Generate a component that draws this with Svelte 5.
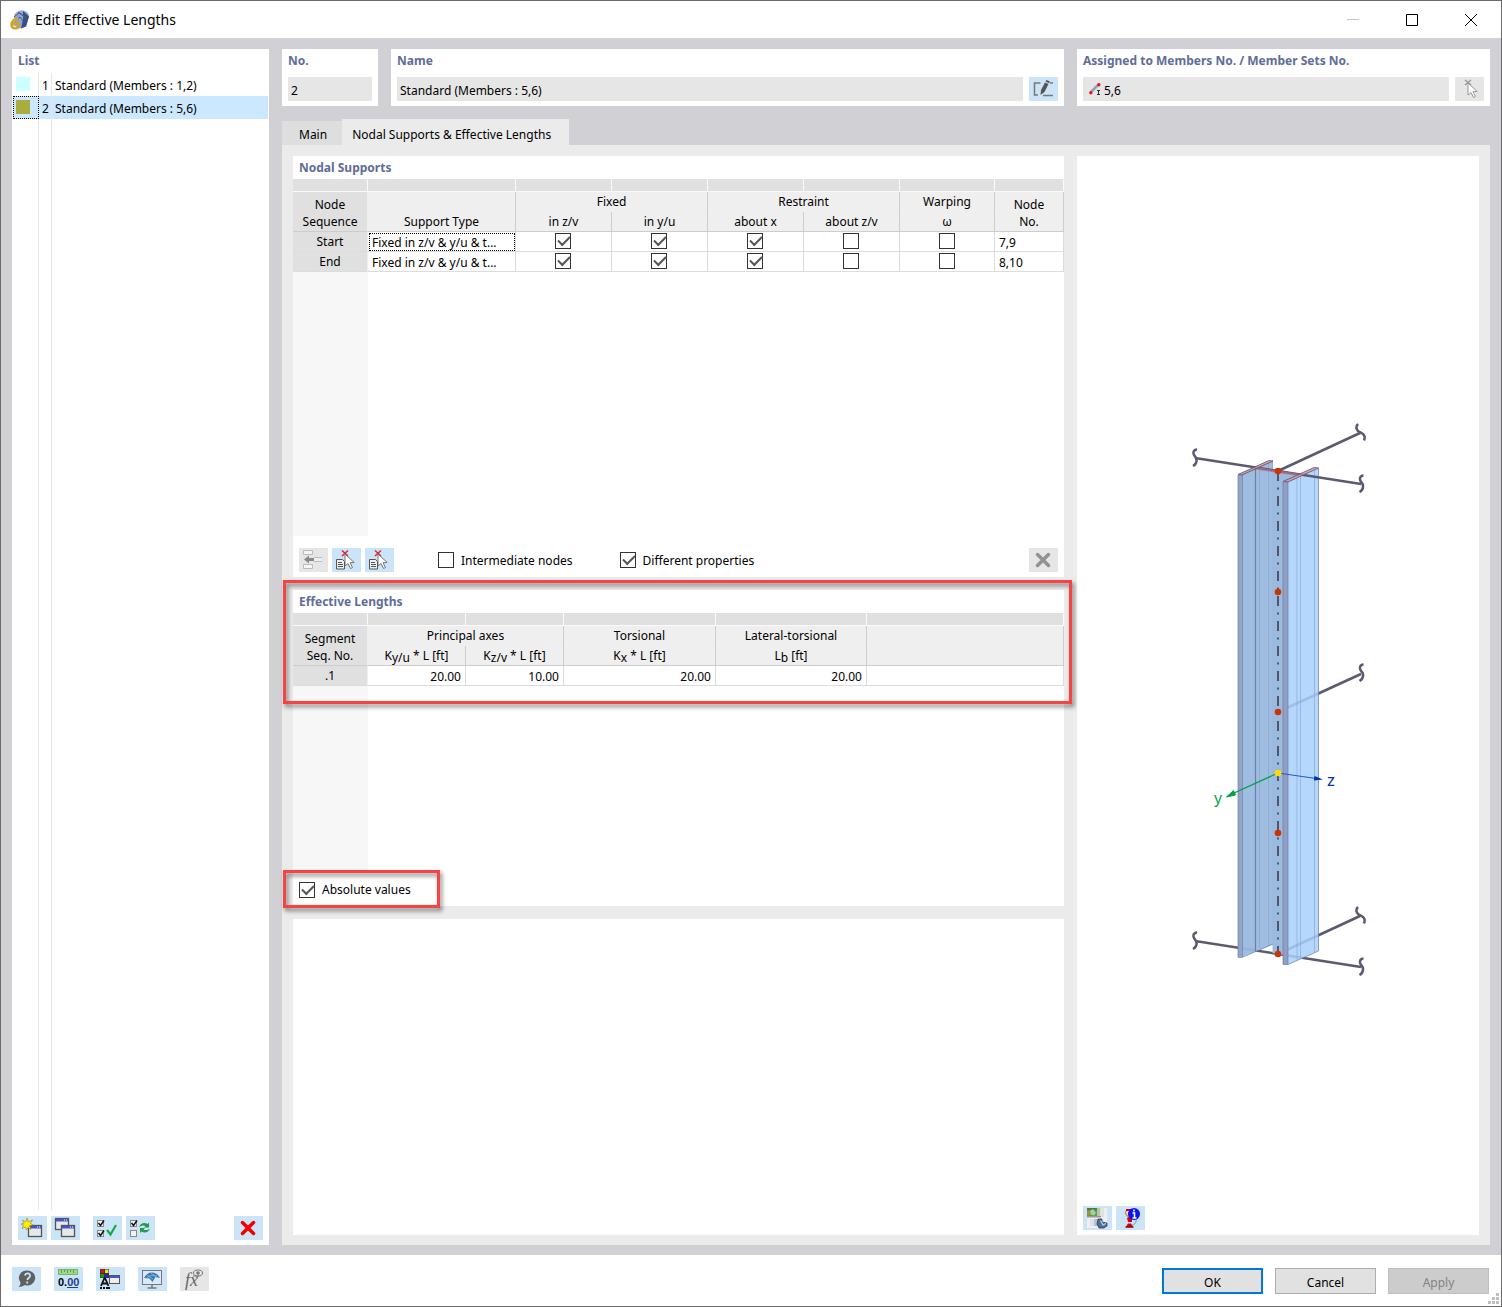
<script lang="ts">
    const members = [
        { no: 1, name: "Standard (Members : 1,2)", color: "#ccffff" },
        { no: 2, name: "Standard (Members : 5,6)", color: "#a9ad40" },
    ];
    let selected: number = 2;
    let name: string = "Standard (Members : 5,6)";
    let assigned: string = "5,6";
    let intermediateNodes: boolean = false;
    let differentProperties: boolean = true;
    let absoluteValues: boolean = true;

    const checkColumns: string[] = [
        "Fixed in z/v",
        "Fixed in y/u",
        "Restraint about x",
        "Restraint about z/v",
        "Warping ω",
    ];
    let supports = [
        { seq: "Start", type: "Fixed in z/v & y/u & t...", checks: [true, true, true, false, false], nodes: "7,9" },
        { seq: "End", type: "Fixed in z/v & y/u & t...", checks: [true, true, true, false, false], nodes: "8,10" },
    ];
    const segments = [{ seq: ".1", values: ["20.00", "10.00", "20.00", "20.00"] }];

    const footerTools = [
        { icon: "help", label: "Help" },
        { icon: "units", label: "Units and decimal places" },
        { icon: "display", label: "Display settings" },
        { icon: "view", label: "View" },
        { icon: "formula", label: "Formula", disabled: true },
    ];

    const sCurve: string = "c-4 0-4.5 4.500-2 7s2 7.500-2 9.500";
    const zCurve: string = "c-3 3-1.500 7 2.500 8.500s5 4.500 3.500 8";
    const axisNodes: number[] = [61, 182, 302, 423, 544];
</script>

{#snippet miniWindow(x, y)}
    <rect x={x + 0.5} y={y + 0.5} width="13" height="11" fill="#e8e8e8" stroke="#555" stroke-width="1.3" />
    <rect x={x + 1} y={y + 1} width="12" height="2.5" fill="#4656c8" />
    <path d="M{x + 9} {y + 2}h1m1 0h1" stroke="#fff" />
{/snippet}

{#snippet tick(x, y, on)}
    <rect x={x + 0.5} y={y + 0.5} width="6" height="6" fill="#f2f2f2" stroke="#888" />
    {#if on}
        <path d="M{x + 1.5} {y + 3}l2 2.500 3.500-5" fill="none" stroke="#111" stroke-width="1.5" />
    {/if}
{/snippet}

{#snippet icon(kind)}
    <svg viewBox="0 0 29 24" width="29" height="24" aria-hidden="true">
        {#if kind === "new"}
            {@render miniWindow(10, 9)}
            <path d="M9 2l1.200 3.800L14.500 4l-2 3.500 2.500 1.500-3.500.8 1.500 3.700-3-2L8.500 14l-1-3-3.500 1.500 1.500-3.500-2.500-1 3-.8L4.500 4l3.300 1.800z" fill="#ffee00" stroke="#8a8436" stroke-width=".6" />
        {:else if kind === "copy"}
            {@render miniWindow(4, 2)}
            {@render miniWindow(10, 9)}
        {:else if kind === "checkAll"}
            {@render tick(4, 4, true)}
            {@render tick(4, 14, true)}
            <path d="M14 14l3.500 4.500L23 9" fill="none" stroke="#18a848" stroke-width="2.200" />
        {:else if kind === "checkSwap"}
            {@render tick(4, 4, true)}
            {@render tick(4, 14, false)}
            <path d="M13 11c1.500-4 5.500-5 8.500-3l1.500-1.500v5h-5l1.500-1.500c-2-1.200-4.500-.5-6.500 1zM24 12.500c-1.500 4-5.500 5-8.500 3L14 17v-5h5l-1.500 1.500c2 1.200 4.500.5 6.500-1z" fill="#249a4c" />
        {:else if kind === "delete"}
            <path d="M8.500 6.500L19.500 17.500M19.500 6.500L8.500 17.500" stroke="#f40000" stroke-width="3.500" stroke-linecap="round" />
        {:else if kind === "edit"}
            <path d="M11.500 6H5.500v12h3.500M21 6h3M14 18.500h10" fill="none" stroke="#777" stroke-width="1.500" />
            <path d="M12 13l4-7.500 3.500 1.500-4 8-4 3zM16.500 4.500L17.500 3l3.500 1.500-1 1.700z" fill="#555" />
        {:else if kind === "pickGray" || kind === "pick"}
            {@const gray = kind === "pickGray"}
            <path d={gray ? "M10 3l6 5M16 3l-6 5" : "M10 2.500l6 5.500M16 2.500l-6 5.500"} stroke={gray ? "#999" : "#e3262c"} stroke-width="1.500" />
            <path d="M13 6v12l3-2.500 2.500 5 2-1-2.500-4.800 4.200-.2z" fill="#fff" stroke={gray ? "#999" : "#777"} />
            {#if !gray}
                <path d="M4.500 11.500h6l2 2v7.500h-8z" fill="#eee" stroke="#555" />
                <path d="M6 14.500h4M6 16.500h5M6 18.500h5" stroke="#555" />
            {/if}
        {:else if kind === "insert"}
            <path d="M4.500 2.500h9v4h-9zM4.500 16.500h9v4h-9z" fill="#f5f5f5" stroke="#bbb" />
            <path d="M14.500 9.500h8v4h-8z" fill="#f0f0f0" />
            <path d="M15 9.500h8M15 13.500h8" stroke="#bbb" />
            <path d="M5 11.500l5-4v2.500h5v3h-5v2.500z" fill="#888" />
        {:else if kind === "clear"}
            <path d="M8.500 6.500L19.500 17.500M19.500 6.500L8.500 17.500" stroke="#929292" stroke-width="3.500" stroke-linecap="round" />
        {:else if kind === "render"}
            <rect x="4" y="2" width="20" height="20" fill="#eef0ef" />
            <rect x="4" y="2" width="10" height="9" fill="#7b9046" />
            <path d="M4 2h10v2H4z" fill="#5d7445" />
            <path d="M4 5h4v4H4z" fill="#b08a3a" />
            <path d="M7 5l3-2 3 4-2 2.500-3-1z" fill="#7fe3a4" />
            <path d="M14 2h3v9h-3z" fill="#b4c6a5" />
            <path d="M17 2h4v9h-4z" fill="#dde5d8" />
            <path d="M4 10h14v1.500H4z" fill="#999" />
            <path d="M7 13h4v7H7z" fill="#dde2ea" />
            <path d="M11 13h4v7h-4z" fill="#b5c1d6" />
            <path d="M15 13h4v3l5 1v3l-3 2h-5l-2-4z" fill="#526c95" stroke="#2e4260" stroke-width=".8" />
            <path d="M17.500 14.500l2.500 4.500 3-1.500" fill="none" stroke="#b8d0f0" stroke-width="1.300" />
        {:else if kind === "info"}
            <path d="M11 4.500c-3 2-1.500 3.500.5 5.500s4 3.500 2 6" fill="none" stroke="#f08040" stroke-width="1.300" />
            <path d="M14 20c4-1 6.500-4 6.500-7" fill="none" stroke="#72c6c1" stroke-width="1.300" />
            <path d="M10 3h7v2h-7zM12 6l4 3-3 1zM11 12l2-1 3 2v3h-4zM9.500 21.500l2.500-4h3l2.500 4z" fill="#d00010" />
            <path d="M9.500 21h8" stroke="#700" />
            <circle cx="18" cy="8" r="6" fill="#0a12ee" />
            <path d="M18 3.500v2M16.500 7h2v5M16.500 12h4" fill="none" stroke="#fff" stroke-width="1.600" />
        {:else if kind === "help"}
            <path d="M15.500 3.500a7.500 7.500 0 1 1-2.500 14.500c-2 1-4 2-6.500 2 1.500-1.500 2-3 2-4.500a7.500 7.500 0 0 1 7-12z" fill="#606060" />
            <path d="M13 8.500c.5-3.500 6-2.500 5 .8-.5 1.500-2.500 1.700-2.600 3.700M15.200 14.500v2" fill="none" stroke="#cce4f7" stroke-width="1.800" />
        {:else if kind === "units"}
            <rect x="4.500" y="2.500" width="19" height="5" fill="#9bdc80" stroke="#78b565" />
            <path d="M7.500 3v3M10.500 3v2M13.500 3v3M16.500 3v2M19.500 3v3" stroke="#5f9c50" />
            <text x="4" y="19" class="units-text">0.<tspan fill="#1f3d8f">00</tspan></text>
            <path d="M13 20.500h11" stroke="#1f3d8f" />
        {:else if kind === "display"}
            <path d="M4 2h9v9H4z" fill="#333" />
            <path d="M4.500 2.500h3.500v3.500H4.500z" fill="#e01010" />
            <path d="M9 2.500h3.500v3.500H9z" fill="#f5e800" />
            <path d="M4.500 7h3.500v3.500H4.500z" fill="#12a012" />
            <path d="M9 7h3.500v3.500H9z" fill="#2222e0" />
            <path d="M5 19l3.300-7.500h.9L12.500 19M6.500 16.500h4.500" fill="none" stroke="#111" stroke-width="1.800" />
            <path d="M4 21h2m1 0h2m1 0h4" stroke="#111" stroke-width="2" />
            <rect x="13.500" y="8.500" width="10" height="8" fill="#eee" stroke="#555" />
            <path d="M14 10h9" stroke="#4656c8" stroke-width="2" />
        {:else if kind === "view"}
            <rect x="4.500" y="3.500" width="19" height="14" fill="#d8eaf8" stroke="#777" />
            <path d="M6 11c2-4 5-6 9-5.500 3 .5 5.500 2.500 7 5.500l-4.500-1-3 5-3-3.500z" fill="#3f78b2" />
            <path d="M9 8l6 4M13 6l5 4M9 11c3-3 6-3 10-2" fill="none" stroke="#9cc4e6" stroke-width=".7" />
            <path d="M14 18v3M9.500 21h9" stroke="#777" stroke-width="1.500" />
        {:else if kind === "formula"}
            <text x="5" y="19" class="fx">fx</text>
            <path d="M13 9h6" stroke="#777" />
            <ellipse cx="18" cy="6" rx="4.500" ry="3" fill="none" stroke="#777" />
            <circle cx="18" cy="6" r="1.800" fill="#777" />
        {/if}
    </svg>
{/snippet}

<main class="dialog">
    <header class="titlebar">
        <svg class="app-icon" viewBox="0 0 20 20" width="20" height="20" aria-hidden="true">
            <path d="M4 7c0-4 4-6.500 8-6.500 3 0 7 2 7 6l-3 10-6 2-6-3z" fill="#8fa6cf" />
            <path d="M13 1l6 5.500-3 10-5 2 2-9z" fill="#3c4f7e" />
            <path d="M4 7l5-4 7 5M8 2l6 4M6 10l4-3 3 4" fill="none" stroke="#46608f" />
            <path d="M8 9.500C5 8 1.500 11 1.500 14.500c0 5 7.500 5 7.500 1 0-3.500-5-3.500-6.500-.5" fill="none" stroke="#d0a52c" stroke-width="2.500" />
        </svg>
        <h1>Edit Effective Lengths</h1>
        <div class="window-controls">
            <button type="button" aria-label="Minimize" disabled>
                <svg viewBox="0 0 12 12" width="12" height="12"><path d="M0 5.500h12" stroke="#c4c4c4" /></svg>
            </button>
            <button type="button" aria-label="Maximize">
                <svg viewBox="0 0 12 12" width="12" height="12"><path d="M.5.500h11v11H.5z" fill="none" stroke="#000" /></svg>
            </button>
            <button type="button" aria-label="Close">
                <svg viewBox="0 0 12 12" width="12" height="12"><path d="M0 0l12 12M12 0L0 12" stroke="#000" /></svg>
            </button>
        </div>
    </header>

    <div class="body">
        <aside class="panel list">
            <h2>List</h2>
            <ul>
                {#each members as member}
                    <li>
                        <button
                            type="button"
                            class="list-row"
                            class:selected={selected === member.no}
                            on:click={() => (selected = member.no)}
                        >
                            <span class="swatch-cell"><span class="swatch" style="background: {member.color}"></span></span>
                            <span class="number">{member.no}</span>
                            <span class="label">{member.name}</span>
                        </button>
                    </li>
                {/each}
            </ul>
            <div class="list-rest"><span></span><span></span></div>
            <div class="toolbar">
                <button type="button" class="tool" aria-label="New">{@render icon("new")}</button>
                <button type="button" class="tool" aria-label="Copy">{@render icon("copy")}</button>
                <button type="button" class="tool spaced" aria-label="Select all">{@render icon("checkAll")}</button>
                <button type="button" class="tool" aria-label="Invert selection">{@render icon("checkSwap")}</button>
                <button type="button" class="tool last" aria-label="Delete">{@render icon("delete")}</button>
            </div>
        </aside>

        <section class="content">
            <div class="fields">
                <div class="panel no">
                    <h2><label for="no">No.</label></h2>
                    <div class="field"><input id="no" type="text" value="2" readonly /></div>
                </div>
                <div class="panel name">
                    <h2><label for="name">Name</label></h2>
                    <div class="field">
                        <input id="name" type="text" bind:value={name} />
                        <button type="button" class="tool" aria-label="Edit name">{@render icon("edit")}</button>
                    </div>
                </div>
                <div class="panel side">
                    <h2><label for="assigned">Assigned to Members No. / Member Sets No.</label></h2>
                    <div class="field">
                        <div class="with-icon">
                            <svg viewBox="0 0 12 12" width="12" height="12" aria-hidden="true">
                                <path d="M2 9l7-7" stroke="#90a0bb" stroke-width="2.500" />
                                <circle cx="1.800" cy="9.800" r="1.700" fill="#e01818" />
                                <circle cx="9.800" cy="1.800" r="1.700" fill="#e01818" />
                                <path d="M8 7.500h3M9.500 7.500v4M8 11.500h3" stroke="#333" />
                            </svg>
                            <input id="assigned" type="text" bind:value={assigned} />
                        </div>
                        <button type="button" class="tool" aria-label="Pick members" disabled>{@render icon("pickGray")}</button>
                    </div>
                </div>
            </div>

            <div class="tabs" role="tablist">
                <button type="button" role="tab" aria-selected="false">Main</button>
                <button type="button" role="tab" aria-selected="true" class="active">Nodal Supports &amp; Effective Lengths</button>
            </div>

            <div class="tab-page">
                <div class="stack">
                    <section class="panel">
                        <h2>Nodal Supports</h2>
                        <table>
                            <colgroup>
                                <col class="w75" /><col class="w148" /><col class="w96" /><col class="w96" />
                                <col class="w96" /><col class="w96" /><col class="w95" /><col />
                            </colgroup>
                            <thead>
                                <tr class="strip">{#each Array(8) as _}<td></td>{/each}</tr>
                                <tr>
                                    <th rowspan="2" class="row-head">Node<br />Sequence</th>
                                    <th rowspan="2" class="low">Support Type</th>
                                    <th colspan="2" class="group">Fixed</th>
                                    <th colspan="2" class="group">Restraint</th>
                                    <th class="group">Warping</th>
                                    <th rowspan="2" class="tall">Node<br />No.</th>
                                </tr>
                                <tr>
                                    <th>in z/v</th>
                                    <th>in y/u</th>
                                    <th>about x</th>
                                    <th>about z/v</th>
                                    <th>ω</th>
                                </tr>
                            </thead>
                            <tbody>
                                {#each supports as support, i}
                                    <tr>
                                        <th class="row-head">{support.seq}</th>
                                        <td class:focused={i === 0}>{support.type}</td>
                                        {#each support.checks as _, c}
                                            <td class="check">
                                                <input type="checkbox" aria-label="{support.seq} {checkColumns[c]}" bind:checked={support.checks[c]} />
                                            </td>
                                        {/each}
                                        <td>{support.nodes}</td>
                                    </tr>
                                {/each}
                            </tbody>
                        </table>
                        <div class="table-rest"></div>
                        <div class="toolbar roomy">
                            <button type="button" class="tool" aria-label="Insert" disabled>{@render icon("insert")}</button>
                            <button type="button" class="tool" aria-label="Pick node">{@render icon("pick")}</button>
                            <button type="button" class="tool" aria-label="Pick nodes">{@render icon("pick")}</button>
                            <label class="option first"><input type="checkbox" bind:checked={intermediateNodes} />Intermediate nodes</label>
                            <label class="option"><input type="checkbox" bind:checked={differentProperties} />Different properties</label>
                            <button type="button" class="tool last" aria-label="Clear" disabled>{@render icon("clear")}</button>
                        </div>
                    </section>

                    <section class="panel">
                        <div class="marked">
                            <h2>Effective Lengths</h2>
                            <table>
                                <colgroup>
                                    <col class="w75" /><col class="w98" /><col class="w98" />
                                    <col class="w152" /><col class="w151" /><col />
                                </colgroup>
                                <thead>
                                    <tr class="strip">{#each Array(6) as _}<td></td>{/each}</tr>
                                    <tr>
                                        <th rowspan="2" class="row-head">Segment<br />Seq. No.</th>
                                        <th colspan="2" class="group">Principal axes</th>
                                        <th class="group">Torsional</th>
                                        <th class="group">Lateral-torsional</th>
                                        <th rowspan="2"></th>
                                    </tr>
                                    <tr>
                                        <th>K<sub>y/u</sub> * L [ft]</th>
                                        <th>K<sub>z/v</sub> * L [ft]</th>
                                        <th>K<sub>x</sub> * L [ft]</th>
                                        <th>L<sub>b</sub> [ft]</th>
                                    </tr>
                                </thead>
                                <tbody>
                                    {#each segments as segment}
                                        <tr>
                                            <th class="row-head">{segment.seq}</th>
                                            {#each segment.values as value}
                                                <td class="value">{value}</td>
                                            {/each}
                                            <td></td>
                                        </tr>
                                    {/each}
                                </tbody>
                            </table>
                            <div class="highlight lengths"></div>
                        </div>
                        <div class="table-rest"></div>
                        <div class="absolute-row">
                            <label class="option"><input type="checkbox" bind:checked={absoluteValues} />Absolute values</label>
                            <div class="highlight values"></div>
                        </div>
                    </section>

                    <section class="panel"></section>
                </div>

                <section class="panel preview">
                    <div class="figure">
                        <svg viewBox="0 0 196 580" width="196" height="580" role="img" aria-label="Member preview">
                            <g fill="none" stroke="#5a5a70" stroke-width="2.500">
                                <path d="M15 531L98 544M98 544L181 557M98 544L180 506M98 302L181 264" />
                                <path d="M17 39.500{sCurve}M183.500 65.500{sCurve}M183.500 254.500{sCurve}" />
                                <path d="M17 522.500{sCurve}M183.500 548.500{sCurve}" />
                                <path d="M178 14{zCurve}M178 497{zCurve}" />
                            </g>
                            <path d="M92.500 59L122 64.500 103 72V545L92.500 543z" fill="#9bbae0" />
                            <path d="M58 65l35-14.500V534.500L62 547h-4z" fill="#99b8df" fill-opacity=".94" />
                            <path d="M58 65l4-.5V547h-4z" fill="#94a3c6" />
                            <path d="M103 72l35.500-14V541L108 554.500h-5z" fill="#a8d0fb" fill-opacity=".85" />
                            <path d="M103 72l5-.5v483h-5z" fill="#919fc2" />
                            <g fill="none" stroke="#6b7ea8" stroke-width=".7">
                                <path d="M58 65V547.500H62L93 534M62.500 64V547M103 72V554.500h5L138.500 541V58M108 72V554" />
                                <path d="M75.500 58V541" stroke-width="1.200" />
                                <path d="M79.500 57V538M88.500 53V536M92.500 50.500V61" stroke="#8ba2cc" />
                                <path d="M117 68V550M120.500 66V549M134.500 60V542" stroke="#89aadb" />
                            </g>
                            <path d="M15 48L181 74M98 61L180 23" stroke="#5a5a70" stroke-width="2.500" />
                            <path d="M76 57l45 7v2.500L75 59.500z" fill="#b07088" fill-opacity=".75" />
                            <path d="M58 64.500l31-14 4 .500-31 14zM103 71.500l31-14 4.500.5-30.500 14z" fill="#c98e9d" fill-opacity=".8" stroke="#5f5467" stroke-width=".8" />
                            <path d="M98 61V544" stroke="#555568" stroke-width="2" stroke-dasharray="10 6.500 2 6.500" />
                            <path d="M98 363L54 383" stroke="#00a045" stroke-width="1.300" />
                            <path d="M46.500 387l7-6.500 2 4.500z" fill="#00a045" stroke="#00a045" />
                            <path d="M98 363l38 5.500" stroke="#2854c4" />
                            <path d="M143 369.500l-8.500-3.500-.5 4.500z" fill="#0030b4" />
                            {#each axisNodes as y}
                                <circle cx="98" cy={y} r="3.300" fill="#cc3300" />
                            {/each}
                            <circle cx="98" cy="363" r="3.300" fill="#ffdd00" />
                            <text x="34" y="394" fill="#00a045">y</text>
                            <text x="147" y="376" fill="#0030b4">z</text>
                        </svg>
                    </div>
                    <div class="toolbar">
                        <button type="button" class="tool" aria-label="Render">{@render icon("render")}</button>
                        <button type="button" class="tool" aria-label="Info">{@render icon("info")}</button>
                    </div>
                </section>
            </div>
        </section>
    </div>

    <footer>
        {#each footerTools as tool}
            <button type="button" class="tool" aria-label={tool.label} disabled={tool.disabled}>{@render icon(tool.icon)}</button>
        {/each}
        <div class="actions">
            <button type="button" class="default">OK</button>
            <button type="button">Cancel</button>
            <button type="button" disabled>Apply</button>
        </div>
        <svg class="grip" viewBox="0 0 11 11" width="11" height="11" aria-hidden="true">
            <path d="M8 0h3v3H8zM4 4h3v3H4zM8 4h3v3H8zM0 8h3v3H0zM4 8h3v3H4zM8 8h3v3H8z" fill="#bfbfbf" />
        </svg>
    </footer>
</main>

<style>
    :global(body) {
        margin: 0;
    }
    * {
        box-sizing: border-box;
    }
    .dialog {
        display: flex;
        flex-direction: column;
        min-height: 100vh;
        border: 1px solid #6b6b6b;
        background: #fff;
        color: #000;
        font-family: "Noto Sans", "Segoe UI", sans-serif;
        font-size: 12px;
        line-height: 17px;
    }
    button,
    input {
        font: inherit;
        color: inherit;
        margin: 0;
    }
    button {
        padding: 0;
        border: none;
        background: none;
    }
    svg {
        display: block;
    }
    .titlebar {
        display: flex;
        align-items: center;
        gap: 5px;
        height: 37px;
        padding: 0 1px 0 9px;
    }
    h1 {
        flex: 1;
        margin: 0;
        font-size: 14px;
        font-weight: 400;
    }
    .window-controls {
        display: flex;
    }
    .window-controls button {
        display: grid;
        place-items: center;
        width: 59px;
        height: 37px;
    }
    .body {
        display: flex;
        flex: 1;
        gap: 13px;
        padding: 11px 11px 10px;
        background: #d1d0d5;
    }
    .panel {
        display: flex;
        flex-direction: column;
        min-width: 0;
        background: #fff;
    }
    h2 {
        margin: 0;
        padding: 0 6px;
        color: #5f6d98;
        font-size: 12px;
        font-weight: 700;
        line-height: 23px;
    }
    .toolbar {
        display: flex;
        align-items: center;
        gap: 4px;
        padding: 6px 6px 5px;
    }
    .roomy {
        padding-top: 12px;
    }
    .tool {
        flex: none;
        width: 29px;
        height: 24px;
        background: #cce4f7;
    }
    .tool:hover {
        background: #b9daf3;
    }
    .tool:disabled {
        background: #e6e6e6;
    }
    .spaced {
        margin-left: 9px;
    }
    .last {
        margin-left: auto;
    }
    .list {
        flex: 0 0 257px;
    }
    ul {
        margin: 0;
        padding: 1px 1px 0;
        list-style: none;
    }
    .list-row {
        display: flex;
        width: 100%;
        height: 23px;
        line-height: 25px;
        text-align: left;
    }
    .selected {
        background: #cce8ff;
    }
    .swatch-cell {
        height: 23px;
        width: 26px;
        padding: 4px 3px;
        border-right: 1px solid #e6e6e6;
    }
    .selected .swatch-cell {
        outline: 1px dotted #000;
        outline-offset: -1px;
    }
    .swatch {
        display: block;
        width: 14px;
        height: 14px;
    }
    .number {
        height: 23px;
        width: 13px;
        padding-left: 3px;
        border-right: 1px solid #e6e6e6;
    }
    .label {
        padding-left: 3px;
    }
    .list-rest {
        display: flex;
        flex: 1;
        padding-left: 1px;
    }
    .list-rest span {
        width: 26px;
        border-right: 1px solid #e6e6e6;
    }
    .list-rest span + span {
        width: 13px;
    }
    .content {
        display: flex;
        flex: 1;
        flex-direction: column;
        min-width: 0;
    }
    .fields {
        display: flex;
        gap: 13px;
    }
    .no {
        flex: 0 0 96px;
    }
    .name {
        flex: 1;
    }
    .side {
        flex: 0 0 413px;
    }
    .field {
        display: flex;
        gap: 6px;
        padding: 5px 6px;
    }
    .field input {
        flex: 1;
        width: 100%;
        min-width: 0;
        height: 24px;
        padding: 2px 3px 0;
        border: none;
        background: #e6e6e6;
    }
    .with-icon {
        display: flex;
        flex: 1;
        align-items: center;
        padding-left: 6px;
        background: #e6e6e6;
    }
    .tabs {
        display: flex;
        align-items: flex-end;
        margin-top: 13px;
    }
    .tabs button {
        height: 24px;
        padding: 2px 15px 0 17px;
        background: #dedede;
    }
    .tabs .active {
        height: 26px;
        padding: 4px 18px 0 10px;
        background: #ebebeb;
    }
    .tab-page {
        display: flex;
        flex: 1;
        gap: 13px;
        padding: 11px 11px 10px;
        background: #ebebeb;
    }
    .stack {
        display: grid;
        flex: 1;
        grid-template-rows: 4fr 3fr 3fr;
        gap: 13px;
        min-width: 0;
    }
    table {
        width: 100%;
        border-collapse: separate;
        border-spacing: 0;
        table-layout: fixed;
    }
    .w75 { width: 75px; }
    .w148 { width: 148px; }
    .w96 { width: 96px; }
    .w95 { width: 95px; }
    .w98 { width: 98px; }
    .w152 { width: 152px; }
    .w151 { width: 151px; }
    th,
    td {
        height: 20px;
        padding: 0 4px;
        border-right: 1px solid #dcdcdc;
        border-bottom: 1px solid #dcdcdc;
        font-weight: 400;
        text-align: left;
        white-space: nowrap;
    }
    tbody td {
        padding-top: 2px;
    }
    thead th {
        padding: 0;
        border-color: #cdcdcd;
        background: #efefef;
        text-align: center;
    }
    .strip td {
        height: 13px;
        padding: 0;
        border-color: #fafafa;
        background: #e0e0e0;
    }
    .group {
        border-bottom-color: #efefef;
    }
    .low {
        padding-bottom: 1px;
        vertical-align: bottom;
    }
    .row-head {
        padding: 0;
        border-right-color: #efefef;
        background: #e0e0e0;
        text-align: center;
    }
    thead .row-head,
    .tall {
        padding-top: 3px;
    }
    .focused {
        outline: 1px dotted #000;
        outline-offset: -2px;
    }
    td.check {
        padding: 0 1px 1px 0;
        line-height: 0;
        text-align: center;
    }
    .check input {
        vertical-align: top;
    }
    .value {
        text-align: right;
    }
    sub {
        font-size: 12px;
        line-height: 0;
        vertical-align: -2px;
    }
    .table-rest {
        flex: 1;
        width: 75px;
        background: #f7f7f7;
    }
    input[type="checkbox"] {
        display: inline-grid;
        flex: none;
        width: 16px;
        height: 16px;
        border: 1px solid #333;
        background: #fff;
        appearance: none;
    }
    input[type="checkbox"]:checked::after {
        content: "";
        width: 10px;
        height: 5px;
        margin: 2px;
        border: solid #555;
        border-width: 0 0 2px 2px;
        transform: rotate(-45deg);
    }
    .option {
        display: flex;
        align-items: center;
        gap: 7px;
        margin-left: 43px;
    }
    .marked,
    .absolute-row {
        position: relative;
    }
    .absolute-row {
        padding: 8px 6px;
    }
    .absolute-row .option {
        margin: 0;
    }
    .highlight {
        position: absolute;
        border: 3px solid #f94343;
        filter: drop-shadow(2px 3px 2px rgba(0, 0, 0, 0.5));
        pointer-events: none;
    }
    .lengths {
        inset: -10px -8px -18px -10px;
    }
    .values {
        top: -3px;
        bottom: -2px;
        left: -10px;
        width: 157px;
    }
    .first {
        margin-left: 40px;
    }
    .preview {
        flex: 0 0 402px;
    }
    .figure {
        display: grid;
        flex: 1;
        place-items: center;
        padding-top: 44px;
    }
    .figure text {
        font-family: "Liberation Sans", sans-serif;
        font-size: 16px;
    }
    footer {
        position: relative;
        display: flex;
        align-items: center;
        gap: 13px;
        height: 51px;
        padding: 0 12px 3px 11px;
    }
    .actions {
        display: flex;
        gap: 12px;
        margin: 4px 0 0 auto;
    }
    .actions button {
        width: 101px;
        height: 26px;
        padding-top: 2px;
        border: 1px solid #adadad;
        background: #e1e1e1;
    }
    .actions .default {
        border: 2px solid #0078d7;
    }
    .actions button:disabled {
        border-color: #bfbfbf;
        background: #ccc;
        color: #838383;
    }
    .grip {
        position: absolute;
        right: 2px;
        bottom: 2px;
    }
    .units-text {
        font-family: "Liberation Sans", sans-serif;
        font-size: 11px;
        font-weight: 700;
    }
    .fx {
        fill: #666;
        font-family: "Liberation Serif", serif;
        font-size: 18px;
        font-style: italic;
    }
</style>
